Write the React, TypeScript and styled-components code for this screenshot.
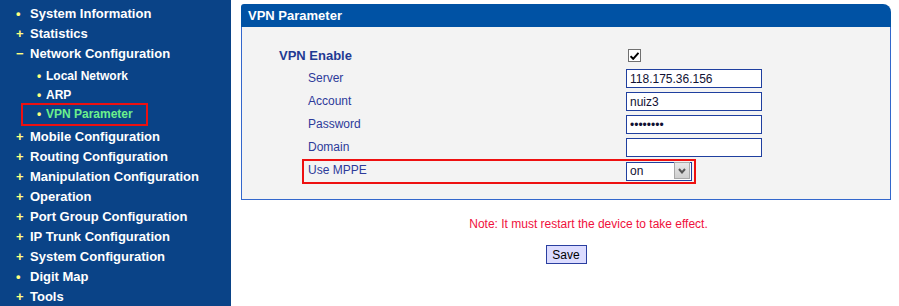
import React from 'react';
import styled, { createGlobalStyle } from 'styled-components';

const GlobalStyle = createGlobalStyle`
  html, body {
    margin: 0;
    padding: 0;
    background: #ffffff;
    font-family: "Liberation Sans", Arial, sans-serif;
  }
`;

const Page = styled.div`
  display: flex;
  min-height: 100vh;
`;

const Sidebar = styled.nav`
  width: 231px;
  flex-shrink: 0;
  background: #0a4387;
  padding-top: 4px;
  box-sizing: border-box;
`;

const NavItem = styled.div`
  display: flex;
  height: 20px;
  line-height: 20px;
  color: #ffffff;
  font-weight: 700;
  font-size: 13px;
  white-space: nowrap;
`;

const Marker = styled.span`
  width: 14px;
  margin-left: 16px;
  color: #ffff80;
  font-weight: 700;
`;

const SubList = styled.div`
  margin: 3px 0;
`;

const SubItem = styled.div<{ $active?: boolean }>`
  display: flex;
  width: 123px;
  height: 19px;
  line-height: 19px;
  margin-left: 23px;
  padding-left: 14px;
  box-sizing: border-box;
  font-size: 12px;
  font-weight: 700;
  white-space: nowrap;
  color: ${(p) => (p.$active ? '#6cf08c' : '#ffffff')};
  outline: ${(p) => (p.$active ? '2px solid #ee1010' : 'none')};
`;

const SubMarker = styled.span`
  width: 9px;
  color: #ffff80;
`;

const Main = styled.main`
  padding: 4px 0 0 10px;
  width: 650px;
`;

const Panel = styled.section`
  width: 650px;
`;

const PanelHeader = styled.h2`
  margin: 0;
  height: 23px;
  line-height: 24px;
  padding-left: 7px;
  background: #0052a4;
  border-radius: 3px 8px 0 0;
  color: #ffffff;
  font-size: 13px;
  font-weight: 700;
`;

const PanelBody = styled.div`
  background: #f3f3f3;
  border: 1px solid #3367cc;
  border-top: none;
  padding: 17px 0 15px 0;
`;

const EnableRow = styled.div`
  display: flex;
  align-items: center;
  height: 23px;
  margin-left: 37px;
`;

const EnableLabel = styled.span`
  width: 347px;
  flex-shrink: 0;
  color: #1f3a93;
  font-size: 13px;
  font-weight: 700;
`;

const CheckBox = styled.span`
  display: inline-flex;
  align-items: center;
  justify-content: center;
  width: 13px;
  height: 13px;
  margin-left: 2px;
  box-sizing: border-box;
  border: 1px solid #707070;
  background: #ffffff;
`;

const FieldRow = styled.div<{ $highlight?: boolean }>`
  display: flex;
  align-items: ${(p) => (p.$highlight ? 'flex-start' : 'center')};
  width: ${(p) => (p.$highlight ? '394px' : 'auto')};
  height: ${(p) => (p.$highlight ? '25px' : '23px')};
  margin-left: 60px;
  padding: ${(p) => (p.$highlight ? '2px 0 0 6px' : '0 0 0 6px')};
  box-sizing: border-box;
  outline: ${(p) => (p.$highlight ? '2px solid #ee1010' : 'none')};
  outline-offset: -2px;
`;

const FieldLabel = styled.span`
  width: 318px;
  flex-shrink: 0;
  line-height: 19px;
  color: #2d3a9a;
  font-size: 12px;
`;

const TextInput = styled.input`
  width: 136px;
  height: 19px;
  box-sizing: border-box;
  margin: 0;
  padding: 0 3px;
  border: 1px solid #1f3f9f;
  background: #ffffff;
  color: #111133;
  font-family: "Liberation Sans", Arial, sans-serif;
  font-size: 12px;
  outline: none;
`;

const SelectBox = styled.div`
  position: relative;
  width: 66px;
  height: 19px;
`;

const Select = styled.select`
  appearance: none;
  width: 100%;
  height: 100%;
  box-sizing: border-box;
  margin: 0;
  padding: 0 0 0 3px;
  border: 1px solid #1f3f9f;
  border-radius: 0;
  background: #ffffff;
  color: #111133;
  font-family: "Liberation Sans", Arial, sans-serif;
  font-size: 12px;
`;

const SelectArrow = styled.span`
  position: absolute;
  top: 1px;
  right: 2px;
  width: 16px;
  height: 17px;
  box-sizing: border-box;
  display: flex;
  align-items: center;
  justify-content: center;
  border: 1px solid #a8a8a8;
  background: linear-gradient(#e8e8e8, #cfcfcf);
  pointer-events: none;
`;

const Note = styled.p`
  margin: 17px 0 0 0;
  padding-left: 45px;
  line-height: 14px;
  text-align: center;
  color: #f0103c;
  font-size: 12px;
`;

const Actions = styled.div`
  display: flex;
  justify-content: center;
  margin-top: 14px;
`;

const SaveButton = styled.button`
  width: 41px;
  height: 19px;
  padding: 0;
  border: 1px solid #2a3fa0;
  background: #dcdcff;
  color: #000000;
  font-family: "Liberation Sans", Arial, sans-serif;
  font-size: 12px;
`;

const menu = [
  { label: 'System Information', mark: '•' },
  { label: 'Statistics', mark: '+' },
  { label: 'Network Configuration', mark: '−', open: true },
  { label: 'Mobile Configuration', mark: '+' },
  { label: 'Routing Configuration', mark: '+' },
  { label: 'Manipulation Configuration', mark: '+' },
  { label: 'Operation', mark: '+' },
  { label: 'Port Group Configuration', mark: '+' },
  { label: 'IP Trunk Configuration', mark: '+' },
  { label: 'System Configuration', mark: '+' },
  { label: 'Digit Map', mark: '•' },
  { label: 'Tools', mark: '+' },
];

const subMenu = ['Local Network', 'ARP', 'VPN Parameter'];

const App = () => {
  return (
    <>
      <GlobalStyle />
      <Page>
        <Sidebar>
          {menu.map((item) => (
            <React.Fragment key={item.label}>
              <NavItem>
                <Marker>{item.mark}</Marker>
                {item.label}
              </NavItem>
              {item.open && (
                <SubList>
                  {subMenu.map((sub) => (
                    <SubItem key={sub} $active={sub === 'VPN Parameter'}>
                      <SubMarker>•</SubMarker>
                      {sub}
                    </SubItem>
                  ))}
                </SubList>
              )}
            </React.Fragment>
          ))}
        </Sidebar>
        <Main>
          <Panel>
            <PanelHeader>VPN Parameter</PanelHeader>
            <PanelBody>
              <EnableRow>
                <EnableLabel>VPN Enable</EnableLabel>
                <CheckBox role="checkbox" aria-checked="true">
                  <svg width="9" height="8" viewBox="0 0 9 8">
                    <path d="M0.5 4.2 L3.2 6.8 L8.5 0.8" fill="none" stroke="#000" strokeWidth="2" />
                  </svg>
                </CheckBox>
              </EnableRow>
              <FieldRow>
                <FieldLabel>Server</FieldLabel>
                <TextInput defaultValue="118.175.36.156" />
              </FieldRow>
              <FieldRow>
                <FieldLabel>Account</FieldLabel>
                <TextInput defaultValue="nuiz3" />
              </FieldRow>
              <FieldRow>
                <FieldLabel>Password</FieldLabel>
                <TextInput type="password" defaultValue="12345678" />
              </FieldRow>
              <FieldRow>
                <FieldLabel>Domain</FieldLabel>
                <TextInput defaultValue="" />
              </FieldRow>
              <FieldRow $highlight>
                <FieldLabel>Use MPPE</FieldLabel>
                <SelectBox>
                  <Select defaultValue="on">
                    <option value="on">on</option>
                    <option value="off">off</option>
                  </Select>
                  <SelectArrow>
                    <svg width="8" height="6" viewBox="0 0 8 6">
                      <path d="M1 1 L4 4.5 L7 1" fill="none" stroke="#555" strokeWidth="2" />
                    </svg>
                  </SelectArrow>
                </SelectBox>
              </FieldRow>
            </PanelBody>
          </Panel>
          <Note>Note: It must restart the device to take effect.</Note>
          <Actions>
            <SaveButton>Save</SaveButton>
          </Actions>
        </Main>
      </Page>
    </>
  );
};

export default App;
